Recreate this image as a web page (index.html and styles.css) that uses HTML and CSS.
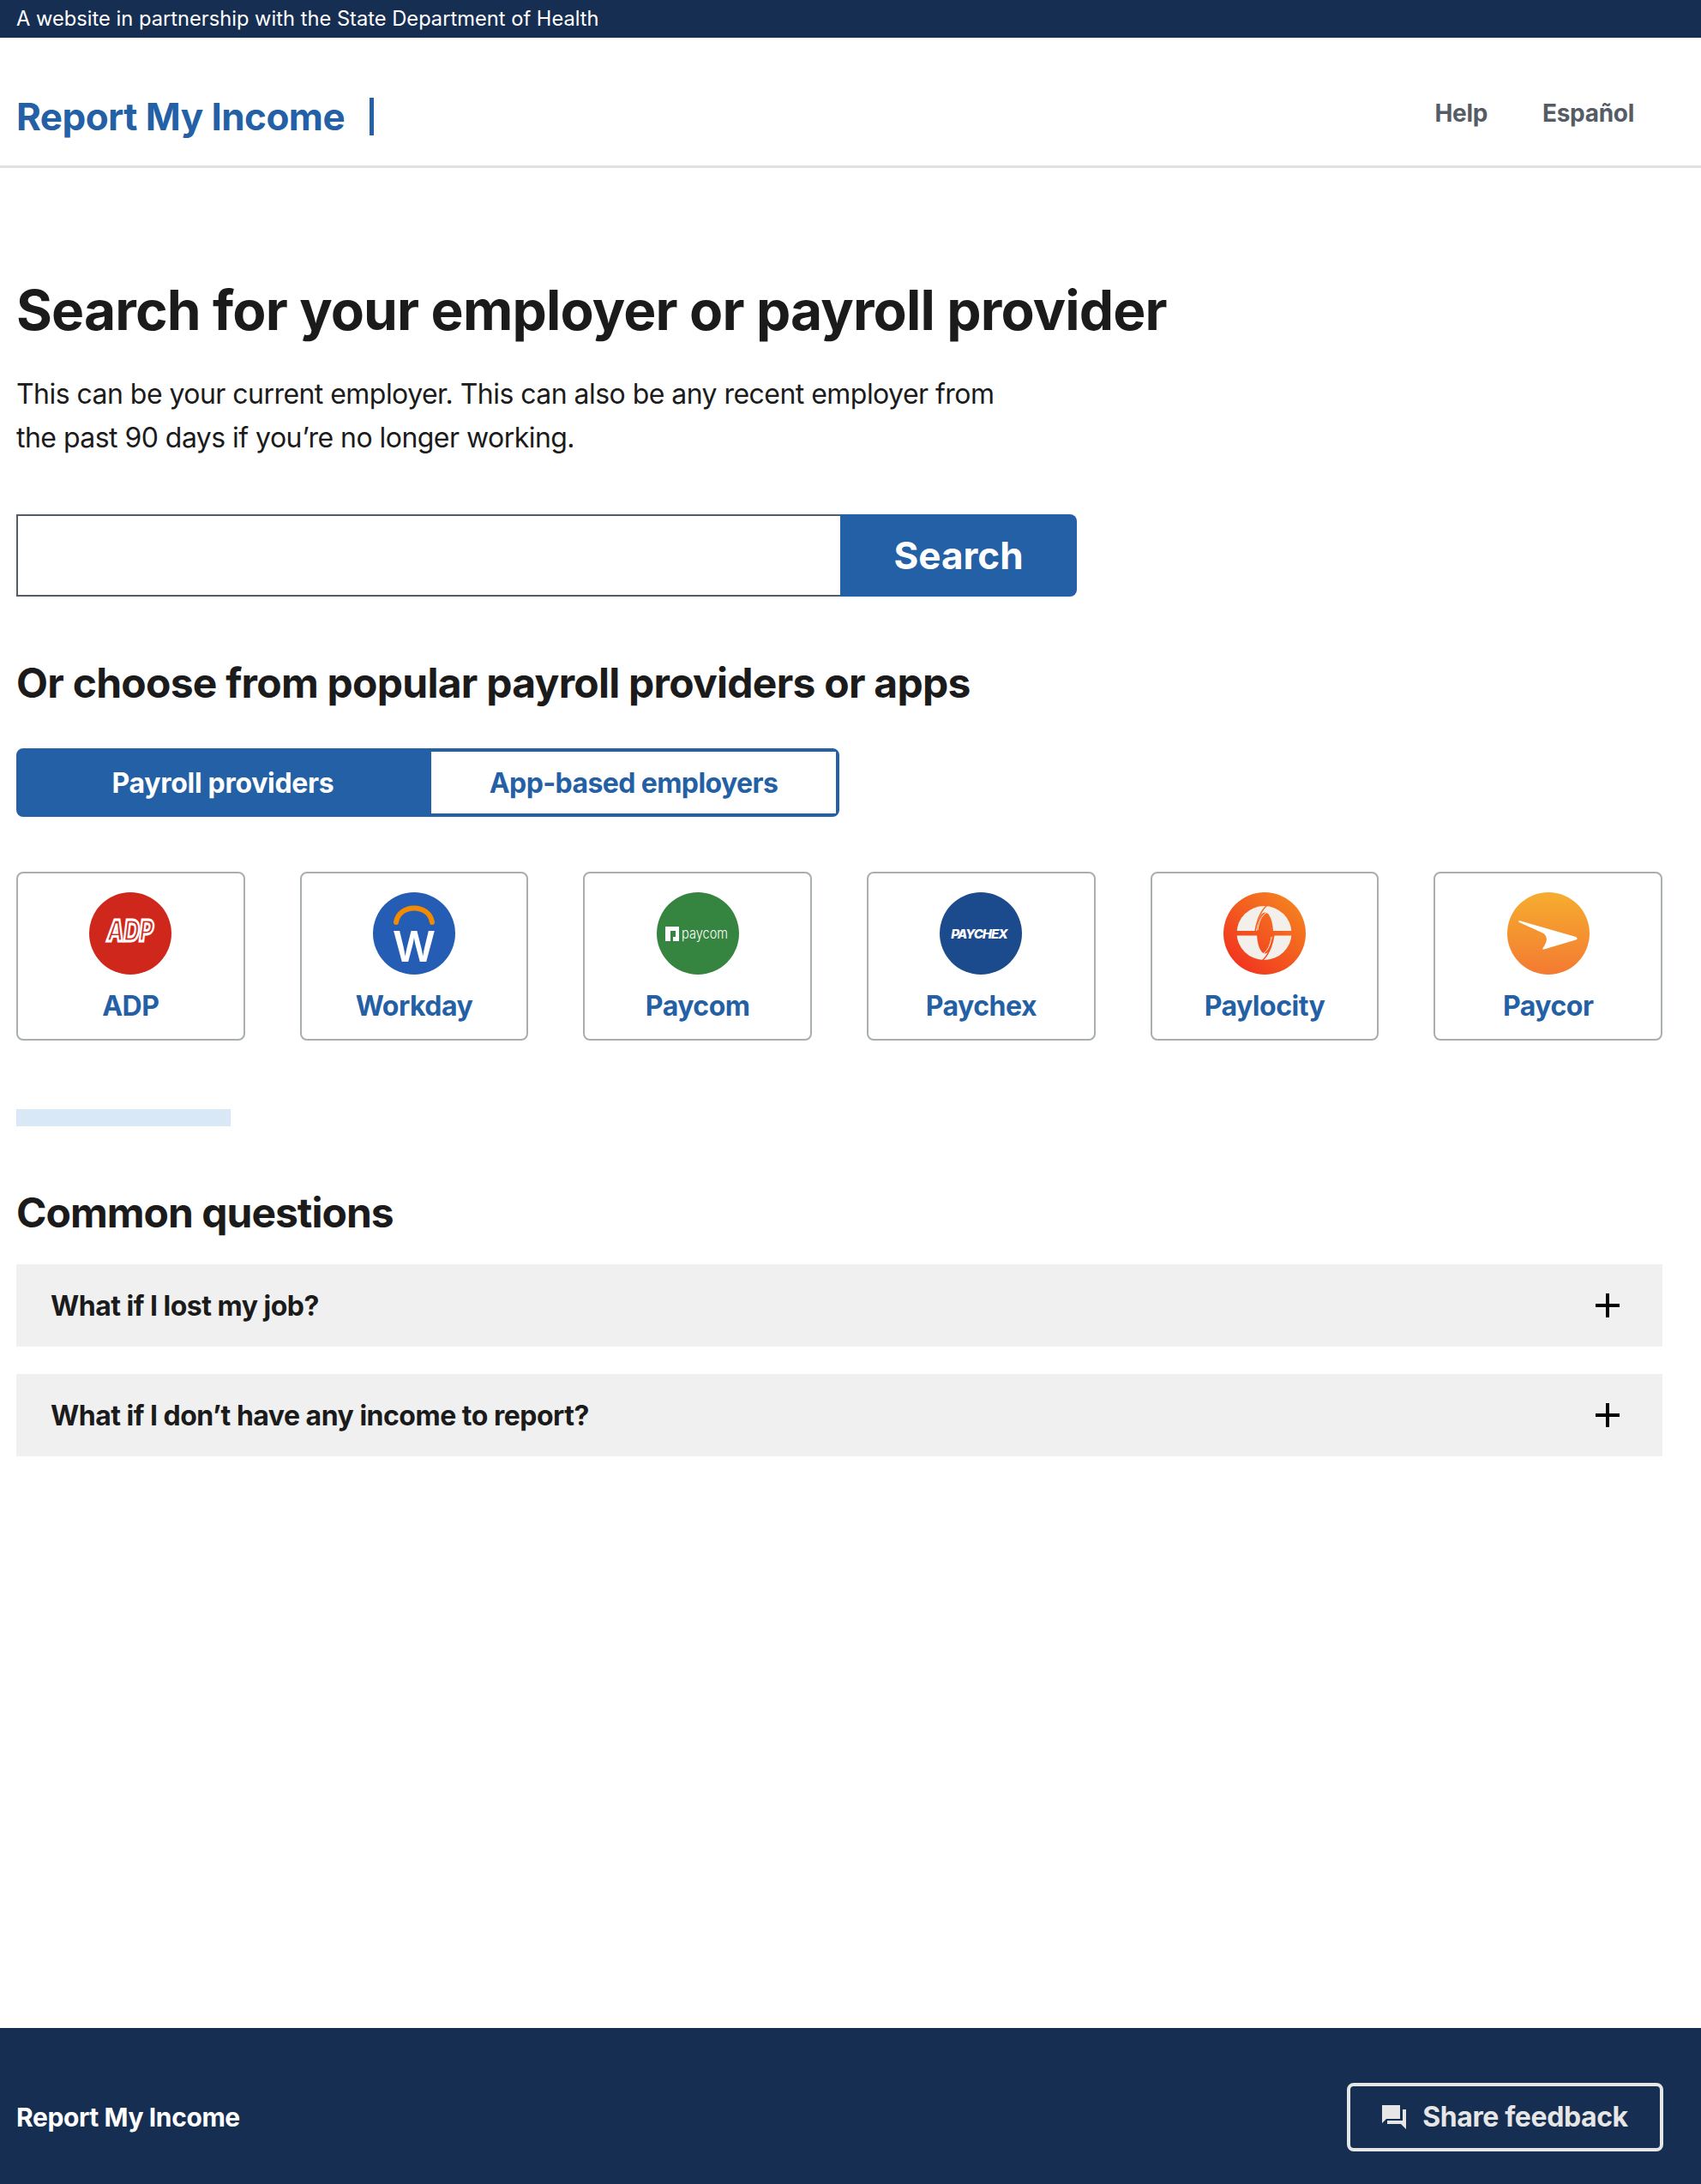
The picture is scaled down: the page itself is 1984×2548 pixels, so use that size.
FILE: index.html
```html
<!DOCTYPE html>
<html lang="en">
<head>
    <meta charset="UTF-8">
    <meta name="viewport" content="width=device-width, initial-scale=1.0">
    <title>Report My Income</title>
    <link rel="stylesheet" href="styles.css">
</head>
<body>
    <div class="banner">A website in partnership with the State Department of Health</div>
    <header class="header">
        <div class="brand">
            <span class="brand-name">Report My Income</span>
            <span class="brand-bar"></span>
        </div>
        <nav class="nav">
            <a href="#">Help</a>
            <a href="#">Español</a>
        </nav>
    </header>

    <main class="main">
        <h1>Search for your employer or payroll provider</h1>
        <p class="intro">This can be your current employer. This can also be any recent employer from the past 90 days if you’re no longer working.</p>

        <form class="search">
            <input type="text" class="search-input">
            <button type="button" class="search-btn">Search</button>
        </form>

        <h2 class="choose">Or choose from popular payroll providers or apps</h2>

        <div class="toggle">
            <button type="button" class="toggle-btn active">Payroll providers</button>
            <button type="button" class="toggle-btn">App-based employers</button>
        </div>

        <div class="providers">
            <a href="#" class="provider">
                <svg class="logo" viewBox="0 0 96 96">
                    <circle cx="48" cy="48" r="48" fill="#d0271d"/>
                    <text x="48" y="57" textLength="54" lengthAdjust="spacingAndGlyphs" class="logo-adp">ADP</text>
                </svg>
                <span>ADP</span>
            </a>
            <a href="#" class="provider">
                <svg class="logo" viewBox="0 0 96 96">
                    <circle cx="48" cy="48" r="48" fill="#255db5"/>
                    <path d="M27 35C30 13 66 13 69 35" fill="none" stroke="#f38b00" stroke-width="6" stroke-linecap="round"/>
                    <text x="48" y="81" class="logo-workday">W</text>
                </svg>
                <span>Workday</span>
            </a>
            <a href="#" class="provider">
                <svg class="logo" viewBox="0 0 96 96">
                    <circle cx="48" cy="48" r="48" fill="#35843f"/>
                    <path d="M10 40H26V57H10Z M16 45V57H19V52H22V45Z" fill="#fff" fill-rule="evenodd"/>
                    <text x="29" y="54" textLength="54" lengthAdjust="spacingAndGlyphs" class="logo-paycom">paycom</text>
                </svg>
                <span>Paycom</span>
            </a>
            <a href="#" class="provider">
                <svg class="logo" viewBox="0 0 96 96">
                    <circle cx="48" cy="48" r="48" fill="#1c4b8d"/>
                    <text x="46" y="54" class="logo-paychex">PAYCHEX</text>
                </svg>
                <span>Paychex</span>
            </a>
            <a href="#" class="provider">
                <svg class="logo" viewBox="0 0 96 96">
                    <defs>
                        <linearGradient id="paylocityGrad" gradientUnits="userSpaceOnUse" x1="10" y1="90" x2="86" y2="8">
                            <stop offset="0" stop-color="#f1301f"/>
                            <stop offset="1" stop-color="#f58420"/>
                        </linearGradient>
                    </defs>
                    <circle cx="48" cy="48" r="48" fill="url(#paylocityGrad)"/>
                    <ellipse cx="47.5" cy="47.5" rx="32" ry="31.5" fill="#f3efea"/>
                    <path d="M14 45H82V50.5H14Z" fill="url(#paylocityGrad)"/>
                    <ellipse cx="48.5" cy="47.5" rx="9.5" ry="24" fill="url(#paylocityGrad)"/>
                    <path d="M51 15C43 22 39 33 37 46" fill="none" stroke="url(#paylocityGrad)" stroke-width="1.6"/>
                    <path d="M50 24C44 27 41 35 40 44" fill="none" stroke="#f3efea" stroke-width="1"/>
                    <path d="M45 80C53 73 57 62 59 49" fill="none" stroke="url(#paylocityGrad)" stroke-width="1.6"/>
                    <path d="M47 71C52 68 55 60 56 52" fill="none" stroke="#f3efea" stroke-width="1"/>
                </svg>
                <span>Paylocity</span>
            </a>
            <a href="#" class="provider">
                <svg class="logo" viewBox="0 0 96 96">
                    <defs>
                        <linearGradient id="paycorGrad" x1="0" y1="0" x2="0" y2="1">
                            <stop offset="0" stop-color="#f6ad2f"/>
                            <stop offset="1" stop-color="#f37a32"/>
                        </linearGradient>
                    </defs>
                    <circle cx="48" cy="48" r="48" fill="url(#paycorGrad)"/>
                    <path d="M14 33L80 52C82 53 82 55 80 55.5L43 66.5C41 67 41 66 42 64.5C46 58 48 53 42.5 48L14 35C13 34 13 33 14 33Z" fill="#fff"/>
                </svg>
                <span>Paycor</span>
            </a>
        </div>

        <div class="skeleton"></div>

        <h2 class="faq-title">Common questions</h2>
        <div class="faq">
            <div class="faq-row">
                <span>What if I lost my job?</span>
                <svg class="plus" viewBox="0 0 28 28"><path d="M14 0V28M0 14H28" stroke="#000" stroke-width="4" fill="none"/></svg>
            </div>
            <div class="faq-row">
                <span>What if I don’t have any income to report?</span>
                <svg class="plus" viewBox="0 0 28 28"><path d="M14 0V28M0 14H28" stroke="#000" stroke-width="4" fill="none"/></svg>
            </div>
        </div>
    </main>

    <footer class="footer">
        <span class="footer-name">Report My Income</span>
        <button type="button" class="feedback">
            <svg class="feedback-icon" viewBox="0 0 28 28"><path d="M0 0H21V16H5L0 21Z M24 5H28V28L22 22H6V18H24Z" fill="#e6e6e6"/></svg>
            Share feedback
        </button>
    </footer>
</body>
</html>
```

FILE: styles.css
```css
* {
    margin: 0;
    padding: 0;
    box-sizing: border-box;
}
body {
    display: flex;
    flex-direction: column;
    min-height: 2548px;
    font-family: "Inter", "Liberation Sans", sans-serif;
    color: #1b1b1b;
    background: #fff;
}
button, input {
    font-family: inherit;
}
.banner {
    height: 44px;
    padding-left: 19px;
    background: #162e51;
    color: #fff;
    font-size: 23.7px;
    line-height: 44px;
}
.header {
    display: flex;
    justify-content: space-between;
    align-items: center;
    height: 152px;
    padding: 34px 78px 0 19px;
    border-bottom: 3px solid #dfe1e2;
}
.brand {
    display: flex;
    align-items: center;
    gap: 29px;
}
.brand-name {
    font-size: 44px;
    font-weight: 700;
    letter-spacing: -0.55px;
    color: #2360a5;
}
.brand-bar {
    width: 5px;
    height: 44px;
    background: #2360a5;
}
.nav {
    display: flex;
    gap: 64px;
    padding-bottom: 8px;
}
.nav a {
    font-size: 28px;
    font-weight: 700;
    letter-spacing: -0.3px;
    color: #565c65;
    text-decoration: none;
}
.main {
    flex: 1;
    padding: 0 45px 0 19px;
}
h1 {
    margin-top: 126px;
    font-size: 64px;
    line-height: 80px;
    font-weight: 700;
    letter-spacing: -0.85px;
}
.intro {
    width: 1150px;
    margin-top: 32px;
    font-size: 32px;
    line-height: 51px;
    letter-spacing: -0.54px;
}
.search {
    display: flex;
    width: 1237px;
    height: 96px;
    margin-top: 64px;
}
.search-input {
    flex: 1;
    border: 2px solid #565c65;
    border-right: 0;
}
.search-btn {
    width: 276px;
    border: 0;
    border-radius: 0 8px 8px 0;
    background: #2360a5;
    color: #fff;
    font-size: 44px;
    font-weight: 700;
}
.choose {
    margin-top: 68px;
    font-size: 48px;
    line-height: 66px;
    font-weight: 700;
    letter-spacing: -0.75px;
}
.toggle {
    display: flex;
    width: 960px;
    height: 80px;
    margin-top: 43px;
    border: 4px solid #2360a5;
    border-radius: 8px;
}
.toggle-btn {
    flex: 1;
    border: 0;
    background: #fff;
    color: #2360a5;
    font-size: 32px;
    font-weight: 700;
    letter-spacing: -0.6px;
}
.toggle-btn.active {
    flex: 0 0 480px;
    padding-right: 6px;
    background: #2360a5;
    color: #fff;
    letter-spacing: -0.3px;
}
.providers {
    display: grid;
    grid-template-columns: repeat(6, 1fr);
    gap: 64px;
    margin-top: 64px;
}
.provider {
    display: flex;
    flex-direction: column;
    align-items: center;
    height: 197px;
    padding-top: 22px;
    border: 2px solid #a9aeb1;
    border-radius: 8px;
    color: #2360a5;
    font-size: 32px;
    font-weight: 700;
    letter-spacing: -0.5px;
    text-decoration: none;
}
.provider span {
    margin-top: 15px;
    line-height: 44px;
}
.logo {
    width: 96px;
    height: 96px;
    letter-spacing: normal;
}
.logo-adp {
    font-size: 34px;
    font-weight: 800;
    font-style: italic;
    text-anchor: middle;
    fill: #d0271d;
    stroke: #fff;
    stroke-width: 3px;
}
.logo-workday {
    font-size: 49px;
    font-weight: 600;
    text-anchor: middle;
    fill: #fff;
}
.logo-paycom {
    font-size: 17px;
    font-weight: 300;
    fill: #fff;
}
.logo-paychex {
    font-size: 15px;
    font-weight: 800;
    font-style: italic;
    letter-spacing: -1px;
    text-anchor: middle;
    fill: #fff;
}
.skeleton {
    width: 250px;
    height: 20px;
    margin-top: 80px;
    background: #d9e8f6;
}
.faq-title {
    margin-top: 68px;
    font-size: 48px;
    line-height: 66px;
    font-weight: 700;
    letter-spacing: -1px;
}
.faq {
    display: flex;
    flex-direction: column;
    gap: 32px;
    margin-top: 27px;
}
.faq-row {
    display: flex;
    justify-content: space-between;
    align-items: center;
    height: 96px;
    padding: 0 50px 0 40px;
    background: #f0f0f0;
    font-size: 32px;
    font-weight: 700;
    letter-spacing: -0.5px;
}
.plus {
    width: 28px;
    height: 28px;
}
.footer {
    display: flex;
    justify-content: space-between;
    align-items: center;
    height: 182px;
    padding: 25px 44px 0 19px;
    background: #162e51;
    color: #fff;
}
.footer-name {
    font-size: 30px;
    font-weight: 700;
    letter-spacing: -0.4px;
}
.feedback {
    display: flex;
    justify-content: center;
    align-items: center;
    gap: 19px;
    width: 369px;
    height: 80px;
    border: 4px solid #e6e6e6;
    border-radius: 8px;
    background: none;
    color: #e6e6e6;
    font-size: 32px;
    font-weight: 700;
    letter-spacing: -0.4px;
}
.feedback-icon {
    width: 28px;
    height: 28px;
}
```
